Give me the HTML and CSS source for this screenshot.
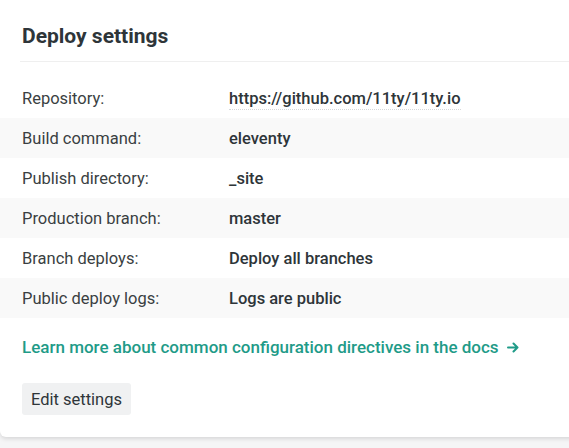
FILE: index.html
```html
<!DOCTYPE html>
<html>
<head>
<meta charset="utf-8">
<link rel="stylesheet" href="styles.css">
</head>
<body>
<section class="card">
  <h2 class="card-title">Deploy settings</h2>
  <dl class="settings">
    <div class="row"><dt>Repository:</dt><dd><a class="repo" href="#">https://github.com/11ty/11ty.io</a></dd></div>
    <div class="row"><dt>Build command:</dt><dd>eleventy</dd></div>
    <div class="row"><dt>Publish directory:</dt><dd>_site</dd></div>
    <div class="row"><dt>Production branch:</dt><dd>master</dd></div>
    <div class="row"><dt>Branch deploys:</dt><dd>Deploy all branches</dd></div>
    <div class="row"><dt>Public deploy logs:</dt><dd>Logs are public</dd></div>
  </dl>
  <a class="docs-link" href="#">Learn more about common configuration directives in the docs<svg class="arrow" width="12" height="11" viewBox="0 0 12 11"><path d="M1 5.5H10.5M6.5 1.5L10.5 5.5L6.5 9.5" fill="none" stroke="currentColor" stroke-width="2" stroke-linecap="round" stroke-linejoin="round"/></svg></a>
  <div class="actions"><button class="btn">Edit settings</button></div>
</section>
</body>
</html>
```
FILE: styles.css
```css
html, body {
  margin: 0;
  padding: 0;
}
body {
  background: #f5f5f6;
  font-family: Roboto, "Liberation Sans", sans-serif;
  color: #2f3538;
  overflow: hidden;
  width: 569px;
  height: 448px;
}
.card {
  background: #fff;
  width: 620px;
  border-radius: 0 0 6px 6px;
  box-shadow: 0 2px 4px rgba(0, 0, 0, 0.12);
  padding: 24px 0 22px 0;
}
.card-title {
  margin: 0 0 0 20px;
  padding: 0 0 13px 2px;
  font-size: 21px;
  line-height: 24px;
  font-weight: 700;
  color: #2e3539;
  border-bottom: 1px solid #efefef;
}
.settings {
  margin: 16px 0 0 0;
  padding: 0;
}
.row {
  display: flex;
  align-items: center;
  height: 40px;
  padding-left: 22px;
}
.row:nth-child(even) {
  background: #f9f9f9;
}
.row dt {
  width: 207px;
  font-size: 16.5px;
  color: #3a3f42;
}
.row dd {
  margin: 0;
  font-size: 16.5px;
  font-weight: 500;
  color: #2e3539;
}
.repo {
  color: inherit;
  text-decoration: none;
  border-bottom: 1px dotted #d6d8da;
  padding-bottom: 1px;
}
.docs-link {
  display: flex;
  align-items: center;
  margin: 19px 0 0 22px;
  font-size: 17px;
  line-height: 20px;
  font-weight: 500;
  color: #1f9b88;
  text-decoration: none;
}
.arrow {
  margin-left: 8px;
}
.actions {
  margin: 26px 0 0 22px;
}
.btn {
  font-family: inherit;
  font-size: 16.5px;
  color: #2e3539;
  background: #f0f1f2;
  border: none;
  border-radius: 3px;
  height: 32px;
  padding: 0;
  width: 109px;
}
```
